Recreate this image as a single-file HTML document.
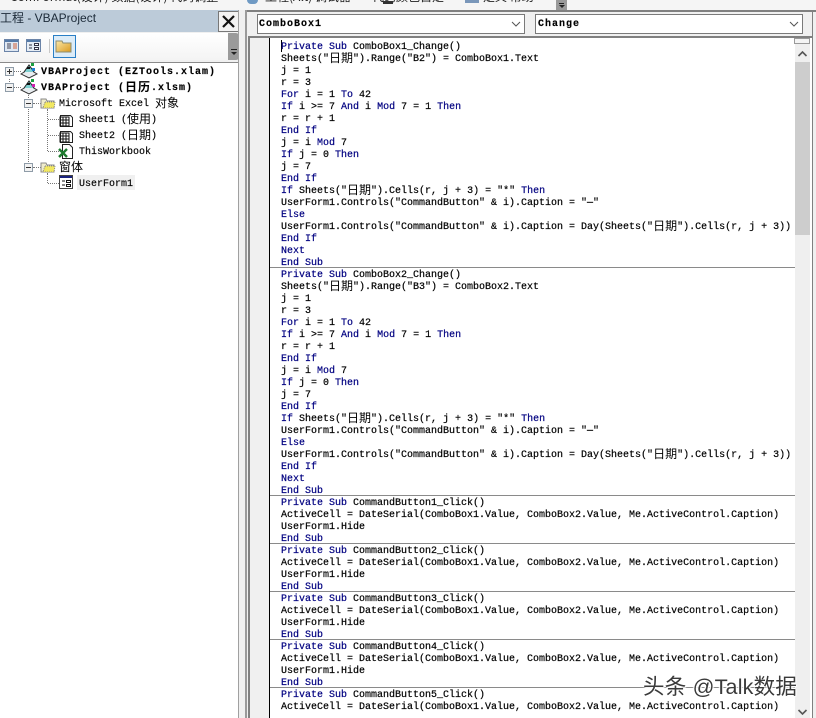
<!DOCTYPE html>
<html><head><meta charset="utf-8"><style>
html,body{margin:0;padding:0;background:#f0f0f0}
#r{position:relative;width:816px;height:718px;overflow:hidden;background:#f0f0f0;font-family:"Liberation Mono","WenQuanYi Zen Hei",monospace}
.a{position:absolute}
.l{position:absolute;left:281px;margin-top:2px;height:12px;line-height:12px;font-size:10px;white-space:pre;color:#000;-webkit-text-stroke:0.2px #000}
.l b{font-weight:normal;color:#000080;-webkit-text-stroke:0.2px #000080}
.l i,.t i{position:relative;top:1px;font-style:normal;font-size:12px;line-height:0;-webkit-text-stroke:0;font-family:"WenQuanYi Zen Hei","Noto Sans CJK SC",sans-serif}
.s{position:absolute;left:270px;width:525px;height:1px;background:#8a8a8a}
.t{position:absolute;margin-top:2px;font-size:10px;line-height:14px;height:14px;white-space:pre;color:#000;-webkit-text-stroke:0.15px #000}
.bd{font-weight:bold;letter-spacing:1px}
.pm{position:absolute;width:7px;height:7px;border:1px solid #8f9ca8;background:#f2f2f2}
.pm:after{content:"";position:absolute;left:1px;top:3px;width:5px;height:1px;background:#333}
.pl:before{content:"";position:absolute;left:3px;top:1px;width:1px;height:5px;background:#333}
.dh{position:absolute;height:0;border-top:1px dotted #777}
.dv{position:absolute;width:0;border-left:1px dotted #777}
.tp{position:absolute;top:-10px;font:12px/14px 'WenQuanYi Zen Hei','Noto Sans CJK SC',sans-serif;color:#222;white-space:pre}
</style></head><body><div id="r">

<!-- top clipped toolbar strip -->
<div class="a" style="left:0;top:0;width:816px;height:10px;background:#f5f5f5"></div>
<div class="tp" style="left:10px">ComFormat(设计) 数据(设计) 代码调整</div>
<div class="tp" style="left:265px">工程(Alt) 调试器</div>
<div class="tp" style="left:372px">代码颜色自定</div>
<div class="tp" style="left:483px">定义 帮助</div>
<div class="a" style="left:247px;top:0;width:11px;height:4px;background:#6f9ac4;border-radius:0 0 5px 5px"></div>
<div class="a" style="left:383px;top:1px;width:10px;height:3px;background:#333"></div>
<div class="a" style="left:465px;top:0;width:14px;height:3px;background:#7a97ba"></div>
<div class="a" style="left:556px;top:0;width:11px;height:11px;background:#999"></div>
<div class="a" style="left:559px;top:3px;width:5px;height:1px;background:#222"></div>
<div class="a" style="left:559px;top:5px;border:3px solid transparent;border-top:3px solid #222"></div>

<!-- project title bar -->
<div class="a" style="left:0;top:10px;width:239px;height:22px;background:#bccbd9"></div>
<div class="a" style="left:0;top:10px;font:12px/16px 'Liberation Sans','Noto Sans CJK SC',sans-serif;color:#1c2a38;white-space:pre">工程 - VBAProject</div>
<div class="a" style="left:218px;top:11px;width:19px;height:19px;background:#f2f2f2;border:1px solid #777;box-sizing:content-box"></div>
<svg class="a" style="left:218px;top:11px" width="21" height="21"><path d="M5 5L16 16M16 5L5 16" stroke="#111" stroke-width="2.2" fill="none"/></svg>

<!-- project toolbar -->
<div class="a" style="left:0;top:33px;width:228px;height:27px;background:linear-gradient(#fff,#f4f4f4)"></div>
<div class="a" style="left:228px;top:33px;width:11px;height:27px;background:#9a9a9a;border-radius:0 3px 3px 0"></div>
<div class="a" style="left:231px;top:49px;width:6px;height:1px;background:#222"></div>
<div class="a" style="left:231px;top:52px;border:3px solid transparent;border-top:3px solid #222"></div>
<svg class="a" style="left:4px;top:38px" width="16" height="15"><rect x="0.5" y="1.5" width="14" height="12" fill="#dfe8f3" stroke="#6b84a8"/><rect x="1" y="2" width="13" height="2" fill="#557aa8"/><path d="M3 6h4M3 8h4M3 10h4" stroke="#445"/><path d="M9 6h4M9 8h4M9 10h4" stroke="#d2603a"/></svg>
<svg class="a" style="left:26px;top:38px" width="16" height="15"><rect x="0.5" y="1.5" width="14" height="12" fill="#e6edf5" stroke="#6b84a8"/><rect x="1" y="2" width="13" height="2" fill="#557aa8"/><path d="M3 7h3M3 10h3" stroke="#334"/><rect x="8.5" y="5.5" width="4" height="2" fill="#fff" stroke="#334"/><rect x="8.5" y="9.5" width="4" height="2" fill="#fff" stroke="#334"/></svg>
<div class="a" style="left:49px;top:39px;width:1px;height:14px;background:#c8c8c8"></div>
<div class="a" style="left:53px;top:35px;width:21px;height:21px;border:1px solid #2a7fc6;background:#dcecf8"></div>
<svg class="a" style="left:55px;top:38px" width="18" height="16"><defs><linearGradient id="g" x1="0" y1="0" x2="1" y2="1"><stop offset="0" stop-color="#fbe8a8"/><stop offset="1" stop-color="#d99a20"/></linearGradient></defs><path d="M1 3h6l1 2h8v9H1z" fill="url(#g)" stroke="#8c8c70"/></svg>

<!-- tree -->
<div class="a" style="left:0;top:62px;width:238px;height:656px;background:#fff;border-top:1px solid #8a8a8a;box-sizing:border-box"></div>

<div class="dv" style="left:9px;top:79px;height:5px"></div>
<div class="dh" style="left:14px;top:71px;width:7px"></div>
<div class="dh" style="left:14px;top:87px;width:7px"></div>
<div class="dv" style="left:28px;top:92px;height:76px"></div>
<div class="dv" style="left:47px;top:109px;height:42px"></div>
<div class="dh" style="left:48px;top:119px;width:11px"></div>
<div class="dh" style="left:48px;top:135px;width:11px"></div>
<div class="dh" style="left:48px;top:151px;width:11px"></div>
<div class="dv" style="left:47px;top:173px;height:10px"></div>
<div class="dh" style="left:48px;top:183px;width:11px"></div>
<div class="dh" style="left:33px;top:103px;width:8px"></div>
<div class="dh" style="left:33px;top:167px;width:8px"></div>

<div class="pm pl" style="left:5px;top:67px"></div>
<div class="pm" style="left:5px;top:83px"></div>
<div class="pm" style="left:24px;top:99px"></div>
<div class="pm" style="left:24px;top:163px"></div>

<svg class="a" style="left:20px;top:62px" width="18" height="18"><path d="M1 12l8-5 8 5-8 4z" fill="#e8edf0" stroke="#333"/><path d="M4 10l5-7 5 7" fill="#7fd0d0" stroke="#222"/><rect x="11" y="1" width="3" height="3" fill="#19a040"/><rect x="7" y="5" width="3" height="2" fill="#111"/><rect x="12" y="6" width="3" height="3" fill="#2080d0"/></svg>
<svg class="a" style="left:20px;top:78px" width="18" height="18"><path d="M1 12l8-5 8 5-8 4z" fill="#e8edf0" stroke="#333"/><path d="M4 10l5-7 5 7" fill="#7fd0d0" stroke="#222"/><rect x="11" y="1" width="3" height="3" fill="#19a040"/><rect x="7" y="5" width="3" height="2" fill="#111"/><rect x="12" y="6" width="3" height="3" fill="#d020b0"/></svg>

<svg class="a" style="left:40px;top:96px" width="16" height="14"><path d="M1 3h5l1 2h7v7H1z" fill="#efeccc" stroke="#888"/><path d="M5 6h10l-1 6H3z" fill="#f2e860" stroke="#888" stroke-dasharray="1 1"/></svg>
<svg class="a" style="left:40px;top:160px" width="16" height="14"><path d="M1 3h5l1 2h7v7H1z" fill="#efeccc" stroke="#888"/><path d="M5 6h10l-1 6H3z" fill="#f2e860" stroke="#888" stroke-dasharray="1 1"/></svg>

<svg class="a" style="left:59px;top:112px" width="15" height="16"><path d="M1.5 3.5h10l2 2v9h-12z" fill="#fff" stroke="#222"/><path d="M1 5h9v9H1z" fill="none" stroke="#111"/><path d="M1 8h9M1 11h9M4 5v9M7 5v9" stroke="#111"/></svg>
<svg class="a" style="left:59px;top:128px" width="15" height="16"><path d="M1.5 3.5h10l2 2v9h-12z" fill="#fff" stroke="#222"/><path d="M1 5h9v9H1z" fill="none" stroke="#111"/><path d="M1 8h9M1 11h9M4 5v9M7 5v9" stroke="#111"/></svg>
<svg class="a" style="left:58px;top:143px" width="16" height="16"><path d="M4.5 1.5h7l3 3v11h-10z" fill="#fff" stroke="#222"/><path d="M1 6l8 8M9 6l-8 8" stroke="#1d7a2e" stroke-width="2.4"/></svg>
<svg class="a" style="left:59px;top:175px" width="15" height="15"><rect x="0.5" y="0.5" width="13" height="13" fill="#fff" stroke="#444"/><rect x="1" y="1" width="12" height="2" fill="#1a237e"/><path d="M3 6h3M3 10h3" stroke="#111"/><rect x="7.5" y="5.5" width="4" height="2" fill="#fff" stroke="#111"/><rect x="7.5" y="9.5" width="4" height="2" fill="#fff" stroke="#111"/></svg>
<div class="a" style="left:77px;top:175px;width:58px;height:15px;background:#f0f0f0"></div>

<div class="t bd" style="left:41px;top:64px">VBAProject (EZTools.xlam)</div>
<div class="t bd" style="left:41px;top:80px">VBAProject (<i>日历</i>.xlsm)</div>
<div class="t" style="left:59px;top:96px">Microsoft Excel <i>对象</i></div>
<div class="t" style="left:79px;top:112px">Sheet1 (<i>使用</i>)</div>
<div class="t" style="left:79px;top:128px">Sheet2 (<i>日期</i>)</div>
<div class="t" style="left:79px;top:144px">ThisWorkbook</div>
<div class="t" style="left:59px;top:160px"><i>窗体</i></div>
<div class="t" style="left:79px;top:176px">UserForm1</div>

<!-- code window frame -->
<div class="a" style="left:238px;top:10px;width:1px;height:708px;background:#a0a0a0"></div>
<div class="a" style="left:245px;top:10px;width:571px;height:2px;background:#808080"></div>
<div class="a" style="left:245px;top:10px;width:2px;height:708px;background:#9a9a9a"></div>
<div class="a" style="left:248px;top:36px;width:564px;height:2px;background:#808080"></div>
<div class="a" style="left:248px;top:36px;width:2px;height:682px;background:#808080"></div>

<!-- combos -->
<div class="a" style="left:257px;top:14px;width:266px;height:18px;background:#fff;border:1px solid #7a7a7a;box-sizing:content-box"></div>
<div class="a bd" style="left:259px;top:18px;font-size:10px;line-height:14px;-webkit-text-stroke:0.15px #000">ComboBox1</div>
<svg class="a" style="left:511px;top:21px" width="10" height="7"><path d="M1 1l4 4 4-4" fill="none" stroke="#555"/></svg>
<div class="a" style="left:535px;top:14px;width:266px;height:18px;background:#fff;border:1px solid #7a7a7a;box-sizing:content-box"></div>
<div class="a bd" style="left:538px;top:18px;font-size:10px;line-height:14px;-webkit-text-stroke:0.15px #000">Change</div>
<svg class="a" style="left:789px;top:21px" width="10" height="7"><path d="M1 1l4 4 4-4" fill="none" stroke="#555"/></svg>

<!-- code area -->
<div class="a" style="left:250px;top:38px;width:19px;height:680px;background:#f0f0f0"></div>
<div class="a" style="left:269px;top:38px;width:1px;height:680px;background:#000"></div>
<div class="a" style="left:270px;top:38px;width:525px;height:680px;background:#fff"></div>
<div class="a" style="left:281px;top:40px;width:1px;height:12px;background:#000"></div>

<!-- scrollbar -->
<div class="a" style="left:795px;top:38px;width:15px;height:680px;background:#efefef"></div>
<div class="a" style="left:794px;top:38px;width:16px;height:6px;background:#f4f4f4;border:1px solid #999;box-sizing:border-box"></div>
<svg class="a" style="left:797px;top:50px" width="11" height="8"><path d="M1.5 6l4-4 4 4" fill="none" stroke="#555" stroke-width="1.6"/></svg>
<div class="a" style="left:795px;top:62px;width:15px;height:173px;background:#cdcdcd"></div>
<svg class="a" style="left:797px;top:708px" width="11" height="8"><path d="M1.5 2l4 4 4-4" fill="none" stroke="#555" stroke-width="1.6"/></svg>
<div class="a" style="left:810px;top:38px;width:2px;height:680px;background:#fff"></div>
<div class="a" style="left:812px;top:12px;width:1px;height:706px;background:#808080"></div>

<!-- separators -->
<div class="s" style="top:267px"></div>
<div class="s" style="top:495px"></div>
<div class="s" style="top:543px"></div>
<div class="s" style="top:591px"></div>
<div class="s" style="top:639px"></div>
<div class="s" style="top:687px"></div>

<!-- code -->
<div class="l" style="top:40px"><b>Private Sub</b> ComboBox1_Change()</div>
<div class="l" style="top:52px">Sheets("<i>日期</i>").Range("B2") = ComboBox1.Text</div>
<div class="l" style="top:64px">j = 1</div>
<div class="l" style="top:76px">r = 3</div>
<div class="l" style="top:88px"><b>For</b> i = 1 <b>To</b> 42</div>
<div class="l" style="top:100px"><b>If</b> i &gt;= 7 <b>And</b> i <b>Mod</b> 7 = 1 <b>Then</b></div>
<div class="l" style="top:112px">r = r + 1</div>
<div class="l" style="top:124px"><b>End If</b></div>
<div class="l" style="top:136px">j = i <b>Mod</b> 7</div>
<div class="l" style="top:148px"><b>If</b> j = 0 <b>Then</b></div>
<div class="l" style="top:160px">j = 7</div>
<div class="l" style="top:172px"><b>End If</b></div>
<div class="l" style="top:184px"><b>If</b> Sheets("<i>日期</i>").Cells(r, j + 3) = "*" <b>Then</b></div>
<div class="l" style="top:196px">UserForm1.Controls("CommandButton" &amp; i).Caption = "—"</div>
<div class="l" style="top:208px"><b>Else</b></div>
<div class="l" style="top:220px">UserForm1.Controls("CommandButton" &amp; i).Caption = Day(Sheets("<i>日期</i>").Cells(r, j + 3))</div>
<div class="l" style="top:232px"><b>End If</b></div>
<div class="l" style="top:244px"><b>Next</b></div>
<div class="l" style="top:256px"><b>End Sub</b></div>

<div class="l" style="top:268px"><b>Private Sub</b> ComboBox2_Change()</div>
<div class="l" style="top:280px">Sheets("<i>日期</i>").Range("B3") = ComboBox2.Text</div>
<div class="l" style="top:292px">j = 1</div>
<div class="l" style="top:304px">r = 3</div>
<div class="l" style="top:316px"><b>For</b> i = 1 <b>To</b> 42</div>
<div class="l" style="top:328px"><b>If</b> i &gt;= 7 <b>And</b> i <b>Mod</b> 7 = 1 <b>Then</b></div>
<div class="l" style="top:340px">r = r + 1</div>
<div class="l" style="top:352px"><b>End If</b></div>
<div class="l" style="top:364px">j = i <b>Mod</b> 7</div>
<div class="l" style="top:376px"><b>If</b> j = 0 <b>Then</b></div>
<div class="l" style="top:388px">j = 7</div>
<div class="l" style="top:400px"><b>End If</b></div>
<div class="l" style="top:412px"><b>If</b> Sheets("<i>日期</i>").Cells(r, j + 3) = "*" <b>Then</b></div>
<div class="l" style="top:424px">UserForm1.Controls("CommandButton" &amp; i).Caption = "—"</div>
<div class="l" style="top:436px"><b>Else</b></div>
<div class="l" style="top:448px">UserForm1.Controls("CommandButton" &amp; i).Caption = Day(Sheets("<i>日期</i>").Cells(r, j + 3))</div>
<div class="l" style="top:460px"><b>End If</b></div>
<div class="l" style="top:472px"><b>Next</b></div>
<div class="l" style="top:484px"><b>End Sub</b></div>

<div class="l" style="top:496px"><b>Private Sub</b> CommandButton1_Click()</div>
<div class="l" style="top:508px">ActiveCell = DateSerial(ComboBox1.Value, ComboBox2.Value, Me.ActiveControl.Caption)</div>
<div class="l" style="top:520px">UserForm1.Hide</div>
<div class="l" style="top:532px"><b>End Sub</b></div>
<div class="l" style="top:544px"><b>Private Sub</b> CommandButton2_Click()</div>
<div class="l" style="top:556px">ActiveCell = DateSerial(ComboBox1.Value, ComboBox2.Value, Me.ActiveControl.Caption)</div>
<div class="l" style="top:568px">UserForm1.Hide</div>
<div class="l" style="top:580px"><b>End Sub</b></div>
<div class="l" style="top:592px"><b>Private Sub</b> CommandButton3_Click()</div>
<div class="l" style="top:604px">ActiveCell = DateSerial(ComboBox1.Value, ComboBox2.Value, Me.ActiveControl.Caption)</div>
<div class="l" style="top:616px">UserForm1.Hide</div>
<div class="l" style="top:628px"><b>End Sub</b></div>
<div class="l" style="top:640px"><b>Private Sub</b> CommandButton4_Click()</div>
<div class="l" style="top:652px">ActiveCell = DateSerial(ComboBox1.Value, ComboBox2.Value, Me.ActiveControl.Caption)</div>
<div class="l" style="top:664px">UserForm1.Hide</div>
<div class="l" style="top:676px"><b>End Sub</b></div>
<div class="l" style="top:688px"><b>Private Sub</b> CommandButton5_Click()</div>
<div class="l" style="top:700px">ActiveCell = DateSerial(ComboBox1.Value, ComboBox2.Value, Me.ActiveControl.Caption)</div>

<!-- watermark -->
<div class="a" style="left:643px;top:674px;font:21.5px/26px 'Liberation Sans','Noto Sans CJK SC',sans-serif;letter-spacing:.2px;color:#3a3a3a;white-space:pre;text-shadow:0 0 2px #fff,0 0 2px #fff,1px 1px 1px #fff,-1px -1px 1px #fff">头条 @Talk数据</div>

</div></body></html>
